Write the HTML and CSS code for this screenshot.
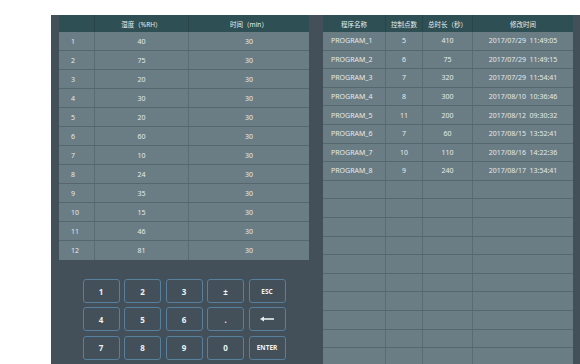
FILE: index.html
```html
<!DOCTYPE html>
<html lang="zh">
<head>
  <meta charset="UTF-8">
  <title>程序设置</title>
  <link rel="stylesheet" href="styles.css">
</head>
<body>

  <div class="panel">
    <div class="left-side">
      <div class="grid step-table">
        <div class="row head">
          <div class="cell"></div>
          <div class="cell">湿度（%RH）</div>
          <div class="cell">时间（min）</div>
        </div>
        <div class="row"><div class="cell num">1</div><div class="cell">40</div><div class="cell">30</div></div>
        <div class="row"><div class="cell num">2</div><div class="cell">75</div><div class="cell">30</div></div>
        <div class="row"><div class="cell num">3</div><div class="cell">20</div><div class="cell">30</div></div>
        <div class="row"><div class="cell num">4</div><div class="cell">30</div><div class="cell">30</div></div>
        <div class="row"><div class="cell num">5</div><div class="cell">20</div><div class="cell">30</div></div>
        <div class="row"><div class="cell num">6</div><div class="cell">60</div><div class="cell">30</div></div>
        <div class="row"><div class="cell num">7</div><div class="cell">10</div><div class="cell">30</div></div>
        <div class="row"><div class="cell num">8</div><div class="cell">24</div><div class="cell">30</div></div>
        <div class="row"><div class="cell num">9</div><div class="cell">35</div><div class="cell">30</div></div>
        <div class="row"><div class="cell num">10</div><div class="cell">15</div><div class="cell">30</div></div>
        <div class="row"><div class="cell num">11</div><div class="cell">46</div><div class="cell">30</div></div>
        <div class="row"><div class="cell num">12</div><div class="cell">81</div><div class="cell">30</div></div>
      </div>

      <div class="keypad">
        <button class="key">1</button>
        <button class="key">2</button>
        <button class="key">3</button>
        <button class="key">±</button>
        <button class="key small">ESC</button>
        <button class="key">4</button>
        <button class="key">5</button>
        <button class="key">6</button>
        <button class="key">.</button>
        <button class="key">
          <svg width="14" height="6" viewBox="0 0 14 6"><path d="M0 3 L4 0.5 L4 5.5 Z" fill="#e8eef0"/><rect x="3.5" y="2.2" width="10.5" height="1.6" fill="#e8eef0"/></svg>
        </button>
        <button class="key">7</button>
        <button class="key">8</button>
        <button class="key">9</button>
        <button class="key">0</button>
        <button class="key small">ENTER</button>
      </div>
    </div>

    <div class="grid program-table">
      <div class="row head">
        <div class="cell">程序名称</div>
        <div class="cell">控制点数</div>
        <div class="cell">总时长（秒）</div>
        <div class="cell">修改时间</div>
      </div>
      <div class="row"><div class="cell name">PROGRAM_1</div><div class="cell">5</div><div class="cell">410</div><div class="cell">2017/07/29&nbsp;&nbsp;11:49:05</div></div>
      <div class="row"><div class="cell name">PROGRAM_2</div><div class="cell">6</div><div class="cell">75</div><div class="cell">2017/07/29&nbsp;&nbsp;11:49:15</div></div>
      <div class="row"><div class="cell name">PROGRAM_3</div><div class="cell">7</div><div class="cell">320</div><div class="cell">2017/07/29&nbsp;&nbsp;11:54:41</div></div>
      <div class="row"><div class="cell name">PROGRAM_4</div><div class="cell">8</div><div class="cell">300</div><div class="cell">2017/08/10&nbsp;&nbsp;10:36:46</div></div>
      <div class="row"><div class="cell name">PROGRAM_5</div><div class="cell">11</div><div class="cell">200</div><div class="cell">2017/08/12&nbsp;&nbsp;09:30:32</div></div>
      <div class="row"><div class="cell name">PROGRAM_6</div><div class="cell">7</div><div class="cell">60</div><div class="cell">2017/08/15&nbsp;&nbsp;13:52:41</div></div>
      <div class="row"><div class="cell name">PROGRAM_7</div><div class="cell">10</div><div class="cell">110</div><div class="cell">2017/08/16&nbsp;&nbsp;14:22:36</div></div>
      <div class="row"><div class="cell name">PROGRAM_8</div><div class="cell">9</div><div class="cell">240</div><div class="cell">2017/08/17&nbsp;&nbsp;13:54:41</div></div>
      <div class="row"><div class="cell"></div><div class="cell"></div><div class="cell"></div><div class="cell"></div></div>
      <div class="row"><div class="cell"></div><div class="cell"></div><div class="cell"></div><div class="cell"></div></div>
      <div class="row"><div class="cell"></div><div class="cell"></div><div class="cell"></div><div class="cell"></div></div>
      <div class="row"><div class="cell"></div><div class="cell"></div><div class="cell"></div><div class="cell"></div></div>
      <div class="row"><div class="cell"></div><div class="cell"></div><div class="cell"></div><div class="cell"></div></div>
      <div class="row"><div class="cell"></div><div class="cell"></div><div class="cell"></div><div class="cell"></div></div>
      <div class="row"><div class="cell"></div><div class="cell"></div><div class="cell"></div><div class="cell"></div></div>
      <div class="row"><div class="cell"></div><div class="cell"></div><div class="cell"></div><div class="cell"></div></div>
      <div class="row"><div class="cell"></div><div class="cell"></div><div class="cell"></div><div class="cell"></div></div>
      <div class="row"><div class="cell"></div><div class="cell"></div><div class="cell"></div><div class="cell"></div></div>
    </div>
  </div>

</body>
</html>
```

FILE: styles.css
```css
body {
  margin: 0;
  background: #fff;
  font-family: 'Noto Sans', 'Noto Sans CJK SC', sans-serif;
  overflow: hidden;
}
.panel {
  display: flex;
  gap: 14px;
  margin: 15px 0 0 51px;
  padding: 0 7px 0 8px;
  width: 514px;
  height: 349px;
  background-color: #434f59;
  overflow: hidden;
}
.left-side {
  width: 250px;
  flex: none;
}
.grid {
  width: 250px;
  flex: none;
  background-color: #6b7d84;
  color: #e3eaeb;
  font-size: 7px;
}
.row {
  display: grid;
  box-sizing: border-box;
  border-bottom: 1px solid #56666d;
}
.step-table .row {
  grid-template-columns: 35px 94px 121px;
  height: 19px;
}
.program-table .row {
  grid-template-columns: 62px 37px 50px 101px;
  height: 18.6px;
}
.row.head {
  height: 17px;
  background-color: #2e4f54;
  border-bottom: none;
  color: #e6eeee;
  font-size: 6.5px;
}
.cell {
  display: flex;
  align-items: center;
  justify-content: center;
  border-left: 1px solid #5b6b72;
  white-space: nowrap;
}
.cell:first-child {
  border-left: none;
}
.head .cell {
  border-left-color: #2a4549;
}
.cell.num {
  justify-content: flex-start;
  padding-left: 12px;
}
.cell.name {
  justify-content: flex-start;
  padding-left: 8px;
}
.step-table .row:last-child {
  border-bottom: none;
}
.keypad {
  display: grid;
  grid-template-columns: repeat(5, 37px);
  grid-auto-rows: 24px;
  column-gap: 4.5px;
  row-gap: 4.3px;
  justify-content: center;
  margin-top: 19px;
}
.key {
  display: flex;
  align-items: center;
  justify-content: center;
  padding: 0;
  background-color: #434f59;
  border: 1.5px solid #56809d;
  border-radius: 3px;
  color: #eef3f4;
  font-family: 'Noto Sans', sans-serif;
  font-size: 8px;
  font-weight: 700;
}
.key.small {
  font-size: 6.5px;
}
```
